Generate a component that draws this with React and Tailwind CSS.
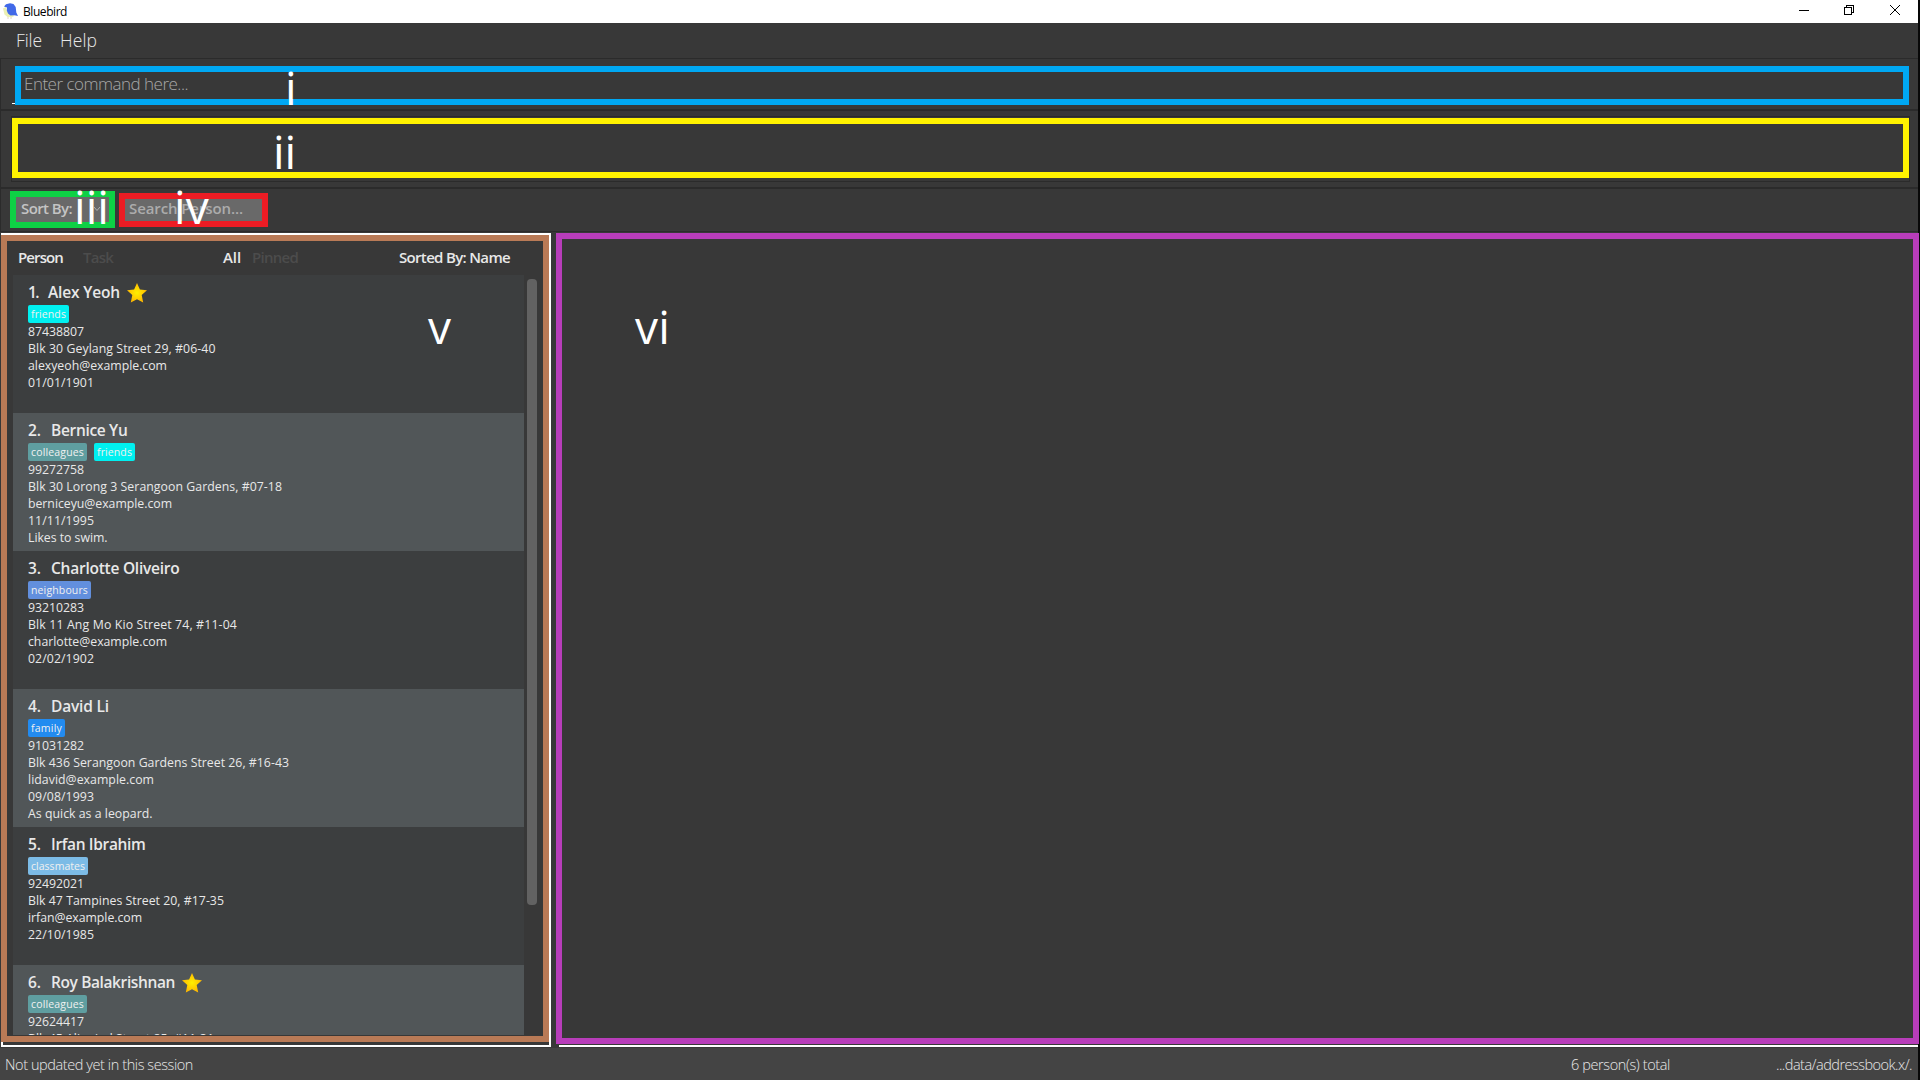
import { useLayoutEffect, useRef } from "react";

// Single-line label whose letter spacing is tuned so it occupies `w` pixels.
function T({ w, className = "", children }) {
  const ref = useRef(null);
  useLayoutEffect(() => {
    const el = ref.current;
    el.style.letterSpacing = "0px";
    const natural = el.getBoundingClientRect().width;
    el.style.letterSpacing = (w - natural) / el.textContent.length + "px";
  }, [w]);
  return (
    <span ref={ref} className={"inline-block whitespace-pre " + className}>
      {children}
    </span>
  );
}

const people = [
  { n: "1.", nw: 10, name: "Alex Yeoh", w: 72, gap: "ml-[10px]", star: true, tags: [["friends", 35, "bg-[#00f0f0]"]], lines: [["87438807", 56], ["Blk 30 Geylang Street 29, #06-40", 187.5], ["alexyeoh@example.com", 139], ["01/01/1901", 66]] },
  { n: "2.", nw: 13, name: "Bernice Yu", w: 76.5, gap: "ml-[10px]", tags: [["colleagues", 53, "bg-[#5f9ea0]"], ["friends", 35, "bg-[#00f0f0]"]], lines: [["99272758", 56], ["Blk 30 Lorong 3 Serangoon Gardens, #07-18", 254], ["berniceyu@example.com", 144], ["11/11/1995", 66], ["Likes to swim.", 79.5]] },
  { n: "3.", nw: 13, name: "Charlotte Oliveiro", w: 128.5, gap: "ml-[10px]", tags: [["neighbours", 57, "bg-[#628fdd]"]], lines: [["93210283", 56], ["Blk 11 Ang Mo Kio Street 74, #11-04", 209], ["charlotte@example.com", 139], ["02/02/1902", 66]] },
  { n: "4.", nw: 13, name: "David Li", w: 58, gap: "ml-[10px]", tags: [["family", 31, "bg-[#228bf0]"]], lines: [["91031282", 56], ["Blk 436 Serangoon Gardens Street 26, #16-43", 261], ["lidavid@example.com", 126], ["09/08/1993", 66], ["As quick as a leopard.", 124.5]] },
  { n: "5.", nw: 13, name: "Irfan Ibrahim", w: 94.5, gap: "ml-[10px]", tags: [["classmates", 54, "bg-[#7cbbe6]"]], lines: [["92492021", 56], ["Blk 47 Tampines Street 20, #17-35", 196], ["irfan@example.com", 114], ["22/10/1985", 66]] },
  { n: "6.", nw: 13, name: "Roy Balakrishnan", w: 124, gap: "ml-[10px]", star: true, tags: [["colleagues", 53, "bg-[#5f9ea0]"]], lines: [["92624417", 56], ["Blk 45 Aljunied Street 85, #11-31", 186]] },
];

function Star() {
  return (
    <svg viewBox="0 0 20 20" className="ml-[7px] mt-px h-5 w-5">
      <defs>
        <radialGradient id="starFill">
          <stop offset="0" stopColor="#fff000" />
          <stop offset="1" stopColor="#ffb800" />
        </radialGradient>
      </defs>
      <path d="M10 0 12.900 6.600 20 7.200 14.700 12 16.200 19.400 10 16.300 3.800 19.400 5.300 12 0 7.200 7.100 6.600Z" fill="url(#starFill)" />
    </svg>
  );
}

function Person({ p, odd }) {
  return (
    <div className={"h-[138px] shrink-0 pl-[15px] pt-[6px] " + (odd ? "bg-[#515658]" : "bg-[#3c3e3f]")}>
      <div className="flex h-[22px] items-center text-[15.5px] font-semibold leading-[22px]">
        <T w={p.nw}>{p.n}</T>
        <T w={p.w} className={p.gap}>{p.name}</T>
        {p.star && <Star />}
      </div>
      <div className="mt-0.5 flex h-[18px] gap-[7px]">
        {p.tags.map(([t, w, c]) => (
          <div key={t} className={"h-[18px] rounded-[2px] px-[3px] text-[10.5px] leading-[18px] text-[#f0f0f0] " + c}>
            <T w={w}>{t}</T>
          </div>
        ))}
      </div>
      {p.lines.map(([t, w]) => (
        <div key={t} className="h-[17px] text-[12.3px] leading-[17px]">
          <T w={w}>{t}</T>
        </div>
      ))}
    </div>
  );
}

function Numeral({ className, w, children }) {
  return (
    <div className={"absolute text-[46px] leading-[50px] text-white " + className}>
      <T w={w}>{children}</T>
    </div>
  );
}

export default function App() {
  return (
    <div className="relative flex h-[1080px] w-[1920px] flex-col overflow-hidden bg-[#383838] text-[#e8e8e8] [font-family:'Open_Sans','Noto_Sans',sans-serif]">
      <header className="flex h-[23px] shrink-0 border-r-2 border-[#1e1e1e] bg-white pl-[3px] text-black">
        <svg viewBox="0 0 16 16" className="mt-[3px] h-4 w-4">
          <path d="M0 5.500 3 4 4 8 8 12 12 12.500 9 14.300 4.500 14 1.500 11.500Z" fill="#eaf0b4" />
          <path d="M1 3.500 3 1.200 7 .2 10.500 1 12.700 4 13.300 9.500 15 13 11.500 12.300 7.500 12.500 5 10.500 3.800 7.500 4 4.500Z" fill="#4169e8" />
          <path d="M5 14V16M8 14V16" stroke="#d8c8c0" strokeWidth=".8" />
        </svg>
        <T w={44} className="ml-1 text-[12px] leading-[23px]">Bluebird</T>
        <svg viewBox="0 0 102 12" className="ml-auto mr-[17px] mt-1 h-3 w-[102px]" fill="none" stroke="#000" shapeRendering="crispEdges">
          <path d="M0 6.5H10" />
          <path d="M45.500 3.500H52.500V10.500H45.500ZM47.500 3V1.500H54.500V8.500H53" />
          <path d="M91 1 101 11M101 1 91 11" shapeRendering="auto" />
        </svg>
      </header>
      <nav className="flex h-[35px] shrink-0 items-center gap-[18px] pl-4 text-[17.5px] font-light">
        <T w={26}>File</T>
        <T w={37}>Help</T>
      </nav>
      <section className="h-[51px] shrink-0 border-l border-t border-[#2b2b2b] pl-[11px] pr-3 pt-[7px]">
        <div className="h-[38px] border-b border-white pl-3 pt-[3px] text-[17px] font-light leading-[30px] text-[#a8a8a8]">
          <T w={164}>Enter command here...</T>
        </div>
      </section>
      <section className="h-[78px] shrink-0 border-l border-t-2 border-[#2b2b2b] pl-[10px] pr-[10px] pt-[5px]">
        <div className="h-[66px] border border-[#2b2b2b]" />
      </section>
      <section className="flex h-[44px] shrink-0 border-l border-t-2 border-[#2b2b2b] pl-[14px] pt-[5px] text-[15px] leading-[24px]">
        <div className="flex h-[30px] w-[94px] items-start bg-[#696969] pl-[6px] text-[#c4c4c4]">
          <T w={51} className="mt-[2px] font-semibold">Sort By:</T>
          <svg viewBox="0 0 8 6" className="ml-[21px] mt-[12px] h-[6px] w-2" fill="none" stroke="#b0b0b0"><path d="M1 1 4 4.500 7 1" /></svg>
        </div>
        <div className="ml-[10px] -mt-px h-[32px] w-[147px] rounded-[2px] bg-[#696969] pl-[10px] text-[#acacac]">
          <T w={114} className="mt-[3px] font-semibold">Search Person...</T>
        </div>
      </section>
      <main className="flex h-[817px] shrink-0 border-t border-[#2b2b2b] pl-px pt-px">
        <section className="flex h-[814px] w-[550px] shrink-0 flex-col border-2 border-white pl-[10px] pr-3 pt-[7px]">
          <div className="flex h-[33px] shrink-0 items-start pl-[5px] text-[15px] font-semibold leading-[30px]">
            <T w={45}>Person</T>
            <T w={30} className="ml-[20px] text-[#4c4c4c]">Task</T>
            <T w={18} className="ml-[110px]">All</T>
            <T w={46} className="ml-[11px] text-[#4c4c4c]">Pinned</T>
            <T w={111} className="ml-[101px]">Sorted By: Name</T>
          </div>
          <div className="flex min-h-0 grow">
            <div className="flex h-[760px] w-[511px] shrink-0 flex-col overflow-hidden">
              {people.map((p, i) => <Person key={p.n} p={p} odd={i % 2 === 1} />)}
            </div>
            <div className="ml-[3px] mt-1 h-[626px] w-[10px] rounded-[4px] bg-[#626262]" />
          </div>
        </section>
        <section className="ml-2 h-[814px] grow border-b-2 border-r border-white" />
      </main>
      <footer className="flex grow items-center bg-[#444444] pl-[5px] pr-[8px] pt-0.5 text-[14.500px] font-light leading-[30px]">
        <T w={188}>Not updated yet in this session</T>
        <T w={99} className="ml-auto">6 person(s) total</T>
        <T w={136} className="ml-[106px]">...data/addressbook.x/.</T>
      </footer>
      <div className="absolute right-0 top-0 h-full w-[2px] bg-[#080808]" />

      <div className="absolute left-[15px] top-[66px] h-[39px] w-[1894px] border-[6px] border-[#00a8f3]" />
      <div className="absolute left-[12px] top-[118px] h-[60px] w-[1897px] border-[6px] border-[#fff200]" />
      <div className="absolute left-[10px] top-[191px] h-[37px] w-[105px] border-[6px] border-[#0ed145]" />
      <div className="absolute left-[119px] top-[193px] h-[34px] w-[149px] border-[6px] border-[#ec1c24]" />
      <div className="absolute left-px top-[235px] h-[807px] w-[548px] border-[6px] border-[#b97a56]" />
      <div className="absolute left-[556px] top-[233px] h-[811px] w-[1363px] border-[6px] border-[#b83dba]" />
      <Numeral className="left-[285px] top-[62px]" w={12}>i</Numeral>
      <Numeral className="left-[273px] top-[126px]" w={23}>ii</Numeral>
      <Numeral className="left-[74px] top-[181px]" w={35}>iii</Numeral>
      <Numeral className="left-[174px] top-[181px]" w={35}>iv</Numeral>
      <Numeral className="left-[428px] top-[301px]" w={24}>v</Numeral>
      <Numeral className="left-[635px] top-[301px]" w={35}>vi</Numeral>
    </div>
  );
}
